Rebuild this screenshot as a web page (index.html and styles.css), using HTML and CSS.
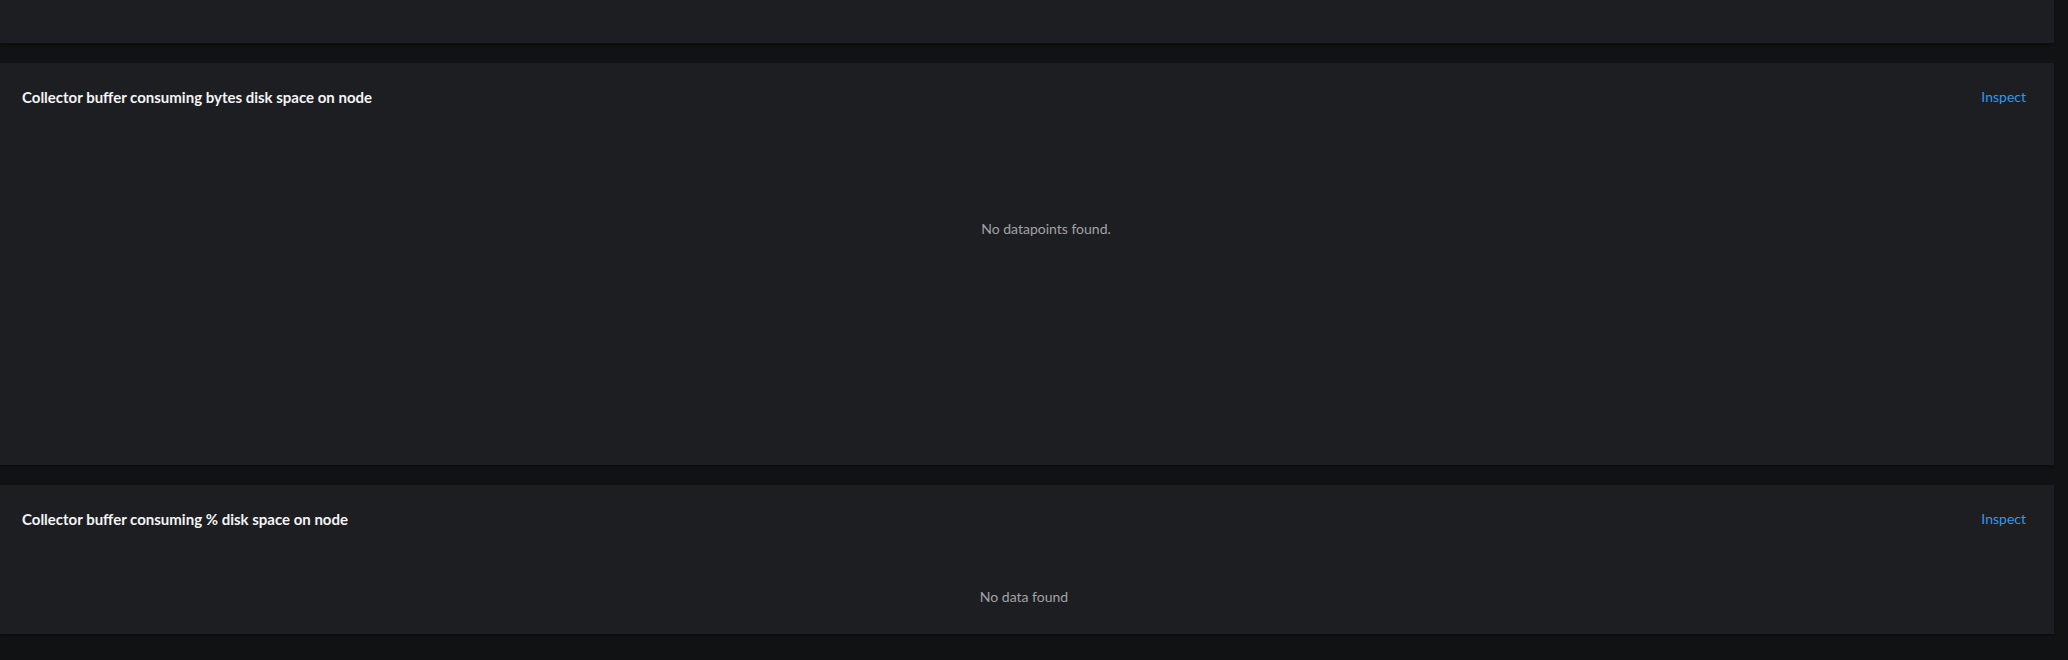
FILE: index.html
```html
<!DOCTYPE html>
<html lang="en">
<head>
<meta charset="utf-8">
<title>Collector buffer</title>
<link rel="stylesheet" href="styles.css">
</head>
<body>
<main class="page">
  <section class="card card-top"></section>

  <section class="card">
    <header class="card-header">
      <h2 class="card-title">Collector buffer consuming bytes disk space on node</h2>
      <a class="inspect" href="#">Inspect</a>
    </header>
    <div class="chart chart-large">
      <p class="empty">No datapoints found.</p>
    </div>
  </section>

  <section class="card">
    <header class="card-header">
      <h2 class="card-title">Collector buffer consuming % disk space on node</h2>
      <a class="inspect" href="#">Inspect</a>
    </header>
    <div class="chart chart-small">
      <p class="empty">No data found</p>
    </div>
  </section>
</main>
</body>
</html>
```

FILE: styles.css
```css
html, body {
  margin: 0;
  padding: 0;
  background: #111214;
}

body {
  font-family: Lato, "Open Sans", "Liberation Sans", sans-serif;
  width: 2068px;
  height: 660px;
  overflow: hidden;
}

.page {
  display: flex;
  flex-direction: column;
  gap: 20px;
  padding-right: 14px;
}

.card {
  background: #1d1e22;
  box-shadow: 0 2px 2px rgba(0, 0, 0, 0.25);
  display: flex;
  flex-direction: column;
}

.card-top {
  height: 43px;
}

.card-header {
  display: flex;
  justify-content: space-between;
  align-items: center;
  padding: 24px 28px 0 22px;
  height: 20px;
}

.card-title {
  margin: 0;
  font-size: 15px;
  line-height: 20px;
  font-weight: 700;
  color: #f4f4f4;
}

.inspect {
  font-size: 14px;
  line-height: 20px;
  color: #2b9af3;
  text-decoration: none;
}

.chart {
  display: flex;
  justify-content: center;
}

.chart-large {
  height: 358px;
  padding-left: 38px;
  align-items: flex-start;
}

.chart-large .empty {
  margin: 112px 0 0;
}

.chart-small {
  height: 105px;
  padding-right: 6px;
  align-items: flex-start;
}

.chart-small .empty {
  margin: 58px 0 0;
}

.empty {
  font-size: 14px;
  line-height: 20px;
  color: #a2a3a5;
}
```
